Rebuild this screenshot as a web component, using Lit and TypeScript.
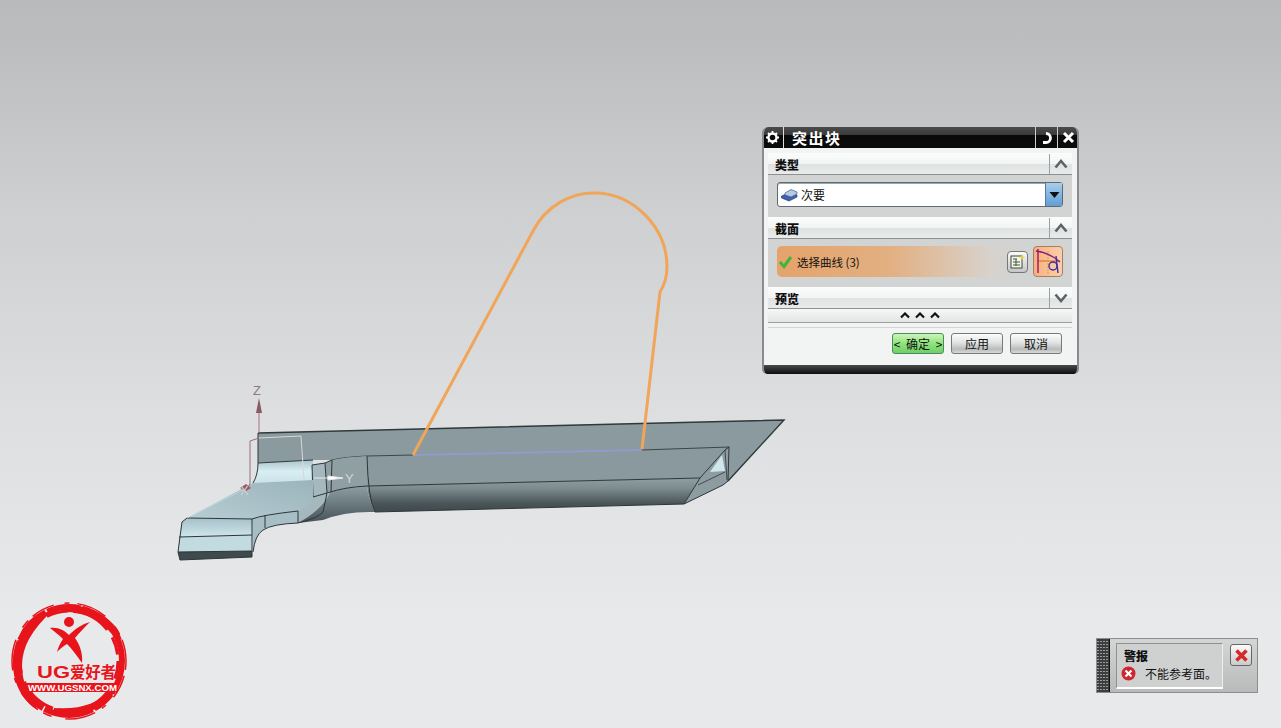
import { LitElement, html, css, svg } from 'lit';
import { customElement } from 'lit/decorators.js';

const CJK = css`"Noto Sans CJK SC", "Liberation Sans", sans-serif`;

@customElement('model-view')
class ModelView extends LitElement {
  static styles = css`
    :host { position: absolute; inset: 0; display: block; }
    svg { display: block; width: 100%; height: 100%; }
    .axis { font: 13px "Liberation Sans", sans-serif; }
  `;

  render() {
    return html`<svg viewBox="0 0 1281 728">
      <defs>
        <linearGradient id="side" x1="0" y1="0" x2="0" y2="1">
          <stop offset="0" stop-color="#8f9ea2" />
          <stop offset=".3" stop-color="#7d8c90" />
          <stop offset=".75" stop-color="#4a5558" />
          <stop offset="1" stop-color="#3f494c" />
        </linearGradient>
        <linearGradient id="fillet" x1="0" y1="0" x2="0" y2="1">
          <stop offset="0" stop-color="#a9c4cc" />
          <stop offset=".5" stop-color="#d9eef3" />
          <stop offset="1" stop-color="#c9e2e8" />
        </linearGradient>
        <linearGradient id="flat" x1="0" y1="1" x2="1" y2="0">
          <stop offset="0" stop-color="#b6cdd4" />
          <stop offset="1" stop-color="#9bb3ba" />
        </linearGradient>
        <linearGradient id="tab" x1="0" y1="0" x2="0" y2="1">
          <stop offset="0" stop-color="#a5c0c9" />
          <stop offset="1" stop-color="#cfe6ec" />
        </linearGradient>
        <linearGradient id="bend" x1="0" y1="0" x2="0" y2="1">
          <stop offset="0" stop-color="#8d9ea3" />
          <stop offset=".55" stop-color="#66757a" />
          <stop offset="1" stop-color="#46525a" />
        </linearGradient>
      </defs>

      <!-- back wall -->
      <path d="M258 433 L784 420 L728 481 L725 449 L367 456 L332 460 L313 460 L258 463 Z" fill="#8b9a9e" />
      <path d="M258 433 L784 420 L728 481" stroke="#2f383a" stroke-width="1.4" fill="none" />
      <path d="M258 433 L258 463" stroke="#2f383a" stroke-width="1" fill="none" />

      <!-- long channel top -->
      <path d="M367 456 L729 447 L700 478 L367 486 Z" fill="#8a999d" />
      <path d="M413 455 L642 450" stroke="#8f9ccb" stroke-width="2" fill="none" />
      <path d="M332 460 Q345 457 367 456 L413 455 M642 450 L729 447 L725 450" stroke="#39464a" stroke-width="1" fill="none" />
      <!-- long channel side -->
      <path d="M367 486 L700 478 L684 504 L375 512 Q368 498 367 486 Z" fill="url(#side)" />
      <path d="M332 460 Q345 457 367 456 L367 486 Q345 487 327 493 L325 463 Z" fill="#8f9fa4" />
      <path d="M327 493 Q345 487 367 486 Q368 498 375 512 Q345 511 323 520 L298 523 L298 511 Q313 505 313 497 Z" fill="url(#bend)" />
      <path d="M700 478 L367 486 M367 456 Q368 498 375 512 L684 504 M327 493 Q345 487 367 486" stroke="#2d3639" stroke-width="1" fill="none" />

      <!-- channel end opening -->
      <path d="M684 504 L700 478 L725 450 L729 447 L728 481 L723 485 Z" fill="#8d9ca0" stroke="#2d3639" stroke-width="1" />
      <path d="M710 472 L722 455 L725 471 Z" fill="#cfe6ec" />
      <path d="M698 485 L725 472 M725 450 L727 480" stroke="#2d3639" stroke-width=".8" fill="none" />

      <!-- fillet and step face -->
      <path d="M258 463 L313 460 L313 480 L253 483 Q258 475 258 463 Z" fill="url(#fillet)" />
      <path d="M258 463 L313 460" stroke="#2f383a" stroke-width="1" fill="none" />
      <path d="M258 463 Q258 475 253 483" stroke="#2f383a" stroke-width="1" fill="none" />
      <path d="M312 465 L325 463 L327 493 L330 493 Q322 510 298 523 L298 511 Q313 505 313 497 Z" fill="#a4b8bd" />
      <path d="M312 465 L325 463 L332 460 M312 465 L313 497 L327 493 M325 463 L327 493 L323 512 Q318 518 298 523 M332 460 L331 492" stroke="#2d3639" stroke-width="1" fill="none" />

      <!-- flat tab -->
      <path d="M187 518 L252 519 Q262 515 298 511 Q313 505 313 497 L313 480 L253 483 Z" fill="url(#flat)" />
      <path d="M252 519 Q262 515 298 511 L298 523 Q272 524 263 530 Q255 535 253 552 Z" fill="#a6bfc6" />
      <path d="M187 518 L252 519 L252 535 L179 537 L182 522 Z" fill="url(#tab)" />
      <path d="M179 537 L252 535 L252 552 L178 552 Z" fill="#c2dbe1" />
      <path d="M178 552 L252 551 L252 557 L180 560 Z" fill="#3f4a4d" />
      <path d="M187 518 L252 519 M187 518 L182 522 L178 552 L180 560 M179 537 L252 535 M178 552 L252 551 M252 519 L252 557 L180 560 M252 519 Q262 515 298 511 L298 523 Q272 524 263 530 Q255 535 253 552 M265 515 L265 528" stroke="#2d3639" stroke-width="1" fill="none" />
      <path d="M187 518 L247 488" stroke="#c9dce1" stroke-width=".7" fill="none" />

      <!-- csys -->
      <path d="M259 405 L259 433" stroke="#a2777c" stroke-width="1" />
      <path d="M259 398 L256 413 L262 413 Z" fill="#8b5a62" />
      <path d="M250 441 L250 484 L247 489" stroke="#9c6d72" stroke-width="1" fill="none" />
      <path d="M250 441 L259 438" stroke="#9c6d72" stroke-width="1" fill="none" />
      <path d="M240 488 L246 484 L251 488 L246 491 Z" fill="#9a5a63" />
      <path d="M259 438 L301 436 L304 480" stroke="#d6d9da" stroke-width="1" fill="none" />
      <path d="M314 478 L328 478 M328 476 L343 478 L328 480 Z" stroke="#e7e9ea" stroke-width="1" fill="#fff" />
      <text class="axis" x="253" y="395" fill="#8f7a80">Z</text>
      <text class="axis" x="345" y="483" fill="#d3d6d8">Y</text>
      <text class="axis" x="240" y="495" fill="#cfd2d4" font-size="10">X</text>

      <!-- sketch curve -->
      <path d="M413 455 L533 231 C546 206 570 193 594 193 C634 193 667 228 667 267 C667 276 665 284 660 292 L642 449" fill="none" stroke="#f0a558" stroke-width="3" stroke-linejoin="round" />
    </svg>`;
  }
}

@customElement('block-dialog')
class BlockDialog extends LitElement {
  static styles = css`
    :host {
      position: absolute; left: 762px; top: 127px; width: 317px; height: 247px;
      display: flex; flex-direction: column; box-sizing: border-box;
      font: 12px ${CJK}; color: #111; background: #f2f3f3;
      border-radius: 6px 6px 5px 5px; overflow: hidden;
      border-left: 2px solid #8a8b8c; border-right: 2px solid #8a8b8c;
    }
    .title {
      height: 21px; margin: 0 -2px; flex: none; display: flex; align-items: stretch; color: #fff;
      background: linear-gradient(#4b4b4b 0, #3a3a3a 38%, #0a0a0a 40%, #0c0c0c 100%);
    }
    .title .gear { width: 21px; display: flex; align-items: center; justify-content: center; border-right: 1px solid #ddd; }
    .title .name { flex: 1; padding-left: 8px; font-size: 15px; font-weight: 700; line-height: 21px; letter-spacing: 1.5px; }
    .title .tb { width: 21px; display: flex; align-items: center; justify-content: center; border-left: 1px solid #ccc; }
    .body { flex: 1; display: flex; flex-direction: column; padding: 5px 5px 0 4px; min-height: 0; }
    .head {
      box-sizing: border-box; height: 22px; flex: none; display: flex; align-items: center; justify-content: space-between;
      background: linear-gradient(#fbfcfc 0, #f3f4f4 50%, #dfe2e2 51%, #e9ebeb 100%);
      border-bottom: 1px solid #8d8f90; padding: 1px 0 0 7px; font-weight: 900; font-size: 12px;
    }
    .chev { width: 22px; height: 100%; border-left: 1px solid #9c9fa1; display: flex; align-items: center; justify-content: center; }
    .group { background: #d2d3d3; flex: none; box-sizing: border-box; }
    .type { height: 42px; padding: 7px 9px 0 9px; }
    .select {
      box-sizing: border-box; height: 25px; display: flex; align-items: center; gap: 3px; background: #fff; padding-left: 3px;
      border: 1px solid #5f6a75; border-radius: 3px; box-shadow: inset 0 1px 0 #9aa;
    }
    .select .label { flex: 1; }
    .select .drop {
      width: 16px; height: 100%; display: flex; align-items: center; justify-content: center;
      background: linear-gradient(#a8cdec, #5f9ed6); border-left: 1px solid #5b7a94;
    }
    .section { height: 48px; padding: 7px 9px 0 9px; }
    .pick {
      height: 31px; display: flex; align-items: center; padding-left: 1px; border-radius: 5px;
      background: linear-gradient(90deg, #e5a36a 0, #e2b083 40%, #d8d2cb 74%, #d2d3d3 84%);
    }
    .pick .text { flex: 1; margin-left: 4px; font-size: 11.5px; }
    .icon-btn {
      box-sizing: border-box; height: 22px; width: 21px; border: 1px solid #777; border-radius: 4px;
      background: linear-gradient(#fafafa, #c5c7c7); display: flex; align-items: center; justify-content: center;
    }
    .icon-btn.on { width: 30px; height: 31px; margin-left: 5px; background: linear-gradient(90deg,#f7b080,#f9d0ac); border-color: #a97e5b; }
    .more {
      box-sizing: border-box; height: 14px; flex: none; display: flex; align-items: center; justify-content: center; gap: 5px;
      background: linear-gradient(#f6f7f7, #e3e5e5); border-bottom: 1px solid #9a9c9d;
    }
    .sep { height: 1px; background: #d4d5d5; flex: none; margin-top: 4px; }
    .actions { flex: 1; display: flex; justify-content: flex-end; align-items: flex-start; gap: 7px; padding: 5px 10px 0 0; }
    button {
      width: 52px; height: 21px; padding: 0; font: 12px ${CJK}; color: #111; border: 1px solid #77797a; border-radius: 3px;
      background: linear-gradient(#fcfcfc, #e2e3e3 45%, #b9bbbb 80%, #d8d9d9);
    }
    button.ok { word-spacing: 3px; background: linear-gradient(#cdf5b8, #8fe37c 50%, #6fcf66); border: 1px solid #4c8a62; }
    .foot { height: 9px; margin: 0 -2px; flex: none; background: linear-gradient(#4a4a4a, #0e0e0e); }
  `;

  chevron(up: boolean) {
    return html`<svg width="14" height="10" viewBox="0 0 14 10">
      <path d=${up ? 'M1.5 8.5 L7 2 L12.5 8.5' : 'M1.5 1.5 L7 8 L12.5 1.5'} fill="none" stroke="#5d6264" stroke-width="2.6" />
    </svg>`;
  }

  render() {
    const caret = svg`<path d="M1 5.5 L5 1.5 L9 5.5" fill="none" stroke="#111" stroke-width="2.2" />`;
    return html`
      <div class="title">
        <span class="gear">
          <svg width="15" height="15" viewBox="0 0 15 15">
            <circle cx="7.5" cy="7.5" r="4" fill="none" stroke="#fff" stroke-width="2.4" />
            <path d="M7.5 1v2.5M7.5 11.5V14M1 7.5h2.5M11.5 7.5H14M3 3l1.7 1.7M10.3 10.3L12 12M12 3l-1.7 1.7M4.7 10.3L3 12" stroke="#fff" stroke-width="1.8" />
          </svg>
        </span>
        <span class="name">突出块</span>
        <span class="tb">
          <svg width="14" height="14" viewBox="0 0 14 14">
            <path d="M6 2.5 A4.4 4.4 0 0 1 6 11.5 H3" fill="none" stroke="#fff" stroke-width="2.8" />
          </svg>
        </span>
        <span class="tb">
          <svg width="13" height="13" viewBox="0 0 13 13">
            <path d="M2 2 L11 11 M11 2 L2 11" stroke="#fff" stroke-width="3" />
          </svg>
        </span>
      </div>
      <div class="body">
        <div class="head"><span>类型</span><span class="chev">${this.chevron(true)}</span></div>
        <div class="group type">
          <div class="select">
            <svg width="17" height="14" viewBox="0 0 17 14">
              <path d="M0.5 8 L8 5 L16 7 L16 9 L8 13 L0.5 10 Z" fill="#3f62ad" stroke="#24407e" stroke-width=".7" />
              <path d="M4 5 L10 1.5 L16 4 L16 6 L10 9 L4 7 Z" fill="#b9c8dd" stroke="#3d5a94" stroke-width=".7" />
            </svg>
            <span class="label">次要</span>
            <span class="drop">
              <svg width="11" height="8" viewBox="0 0 11 8"><path d="M0.5 1 H10.5 L5.5 7 Z" fill="#111" /></svg>
            </span>
          </div>
        </div>
        <div class="head"><span>截面</span><span class="chev">${this.chevron(true)}</span></div>
        <div class="group section">
          <div class="pick">
            <svg width="15" height="14" viewBox="0 0 15 14">
              <path d="M2 7 L6 11.5 L13 2" fill="none" stroke="#3fb53f" stroke-width="3" />
            </svg>
            <span class="text">选择曲线 (3)</span>
            <span class="icon-btn">
              <svg width="17" height="17" viewBox="0 0 17 17">
                <rect x="2" y="3" width="11" height="12" fill="#f4f4ea" stroke="#3b4a3b" />
                <path d="M4 6h4M4 9h7M4 12h7M7 6v7" stroke="#44553f" />
                <path d="M13 1 L14 3.5 L16.5 4 L14 5 L13 7.5 L12 5 L9.5 4 L12 3.5 Z" fill="#e8d24a" />
              </svg>
            </span>
            <span class="icon-btn on">
              <svg width="28" height="29" viewBox="0 0 28 29">
                <path d="M3 14 H26" stroke="#d6691e" stroke-width="1" fill="none" />
                <path d="M14 4 V27" stroke="#d6a01e" stroke-width="1" stroke-dasharray="2 1" fill="none" />
                <path d="M4 2 V26" fill="none" stroke="#a0205f" stroke-width="1.5" />
                <path d="M2 4 C10 5 18 8 26 15" fill="none" stroke="#8a2080" stroke-width="1.4" />
                <circle cx="19" cy="19" r="4" fill="none" stroke="#3b2ea0" stroke-width="1.4" />
                <path d="M22 9 L24 26" stroke="#3b2ea0" stroke-width="1.4" />
              </svg>
            </span>
          </div>
        </div>
        <div class="head"><span>预览</span><span class="chev">${this.chevron(false)}</span></div>
        <div class="more">
          ${[0, 1, 2].map(() => html`<svg width="10" height="7" viewBox="0 0 10 7">${caret}</svg>`)}
        </div>
        <div class="sep"></div>
        <div class="actions">
          <button class="ok">&lt; 确定 &gt;</button>
          <button>应用</button>
          <button>取消</button>
        </div>
      </div>
      <div class="foot"></div>
    `;
  }
}

@customElement('alert-box')
class AlertBox extends LitElement {
  static styles = css`
    :host {
      position: absolute; left: 1096px; top: 638px; width: 162px; height: 55px;
      display: flex; box-sizing: border-box; font: 12px ${CJK}; color: #111;
      background: linear-gradient(#d4d5d5, #b9baba); border: 1px solid #8c8d8e;
    }
    .grip {
      width: 12px; flex: none; border-right: 1px solid #111;
      background:
        repeating-linear-gradient(90deg, transparent 0 2px, #3d3d3d 2px 3px),
        repeating-linear-gradient(#3d3d3d 0 2px, #9b9b9b 2px 3px);
    }
    .msg {
      width: 107px; margin: 4px 0 3px 6px; padding: 4px 0 0 7px; box-sizing: border-box;
      background: #cfd0d0; border: 1px solid #8f9091; border-bottom: 2px solid #fff; border-right-color: #eee;
    }
    .msg b { display: block; font-size: 12px; font-weight: 900; line-height: 15px; }
    .line { display: flex; align-items: center; margin: 2px 0 0 -3px; gap: 9px; white-space: nowrap; }
    .close {
      box-sizing: border-box; width: 22px; height: 22px; margin: 5px 0 0 7px; border: 1px solid #666; border-radius: 3px;
      background: linear-gradient(#fbfbfb, #c9caca); display: flex; align-items: center; justify-content: center;
    }
  `;

  render() {
    return html`
      <div class="grip"></div>
      <div class="msg">
        <b>警报</b>
        <div class="line">
          <svg width="15" height="15" viewBox="0 0 15 15">
            <circle cx="7.5" cy="7.5" r="7" fill="#d1242f" />
            <path d="M4.5 4.5 L10.5 10.5 M10.5 4.5 L4.5 10.5" stroke="#fff" stroke-width="2.2" />
          </svg>
          <span>不能参考面。</span>
        </div>
      </div>
      <div class="close">
        <svg width="15" height="15" viewBox="0 0 15 15">
          <path d="M2.5 2.5 L12.5 12.5 M12.5 2.5 L2.5 12.5" stroke="#d62a2a" stroke-width="3.6" />
        </svg>
      </div>
    `;
  }
}

@customElement('ug-logo')
class UgLogo extends LitElement {
  static styles = css`
    :host { position: absolute; left: 10px; top: 598px; width: 120px; height: 124px; display: block; }
    svg { display: block; }
    .brand { font: 700 16px "Liberation Sans", sans-serif; }
    .cn { font: 700 15.5px ${CJK}; }
    .url { font: 700 9.5px "Liberation Sans", sans-serif; }
  `;

  render() {
    return html`<svg width="120" height="124" viewBox="0 0 120 124">
      <ellipse cx="59" cy="63" rx="53" ry="54" fill="none" stroke="#e8141c" stroke-width="6" stroke-dasharray="34 1.5 22 2 50 1.5 28 3 46 1.5 38 2" />
      <ellipse cx="59" cy="63" rx="49" ry="50" fill="none" stroke="#e8141c" stroke-width="3" stroke-dasharray="18 7 30 12 22 5 40 9" />
      <ellipse cx="59" cy="63" rx="57" ry="58" fill="none" stroke="#e8141c" stroke-width="1.5" stroke-dasharray="9 6 24 11 5 8 31 14" />
      <path d="M33 15 C13 28 2 48 3 68 C4 88 14 104 28 112 C19 98 12 84 12 68 C12 48 22 32 42 13 Z" fill="#e8141c" />
      <path d="M44 115 C66 122 92 114 106 92 L112 78 L102 90 C90 106 68 112 44 110 Z" fill="#e8141c" />
      <path d="M52 9 C72 5 94 12 108 32 L112 42 L100 34 C90 20 72 13 52 14 Z" fill="#e8141c" />
      <circle cx="59" cy="24" r="5" fill="#e8141c" />
      <path d="M40 30 C48 29 54 32 59 37 C65 31 72 26 80 24 C74 30 69 35 65 40 C70 47 73 56 72 65 C67 58 62 51 57 46 C53 48 50 51 47 54 C48 50 50 45 53 41 C49 37 44 33 40 30 Z" fill="#e8141c" />
      <text class="brand" x="27" y="80" fill="#e8141c" textLength="33" lengthAdjust="spacingAndGlyphs">UG</text>
      <text class="cn" x="60" y="80" fill="#e8141c" textLength="46">爱好者</text>
      <rect x="17" y="85" width="91" height="9" fill="#e8141c" />
      <text class="url" x="18" y="93" fill="#fff" textLength="89" lengthAdjust="spacingAndGlyphs">WWW.UGSNX.COM</text>
    </svg>`;
  }
}

@customElement('app-root')
class AppRoot extends LitElement {
  static styles = css`
    :host {
      display: block; position: relative; width: 1281px; height: 728px; overflow: hidden;
      background: linear-gradient(#b8b9bb 0, #cfd0d2 30%, #dfe0e2 60%, #e8e9eb 85%, #e8e9eb 100%);
    }
  `;

  render() {
    return html`
      <model-view></model-view>
      <block-dialog></block-dialog>
      <alert-box></alert-box>
      <ug-logo></ug-logo>
    `;
  }
}
